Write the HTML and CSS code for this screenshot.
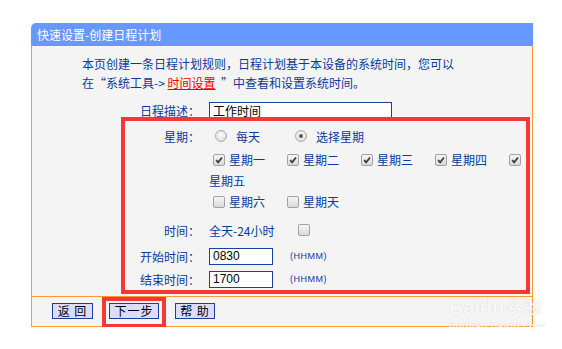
FILE: index.html
```html
<!DOCTYPE html>
<html lang="zh-CN">
<head>
   <meta charset="UTF-8">
   <title>快速设置-创建日程计划</title>
   <link rel="stylesheet" href="styles.css">
</head>
<body>
   <div class="panel">
       <div class="panel-head">快速设置-创建日程计划</div>
       <div class="panel-body">
           <div class="content">
               <p class="intro">
                   本页创建一条日程计划规则，日程计划基于本设备的系统时间，您可以<br>
                   在“系统工具-&gt;&nbsp;<a href="#">时间设置</a>&nbsp; ”中查看和设置系统时间。
               </p>

               <div class="row row-desc">
                   <span class="lbl">日程描述：</span>
                   <input class="text-in desc-in" type="text" value="工作时间">
               </div>

               <div class="row">
                   <span class="lbl">星期：</span>
                   <label class="opt"><span class="radio"></span>每天</label>
                   <label class="opt"><span class="radio on"></span>选择星期</label>
               </div>

               <div class="row row-days">
                   <span class="lbl"></span>
                   <div class="days">
                       <label class="day"><span class="cb on"><svg viewBox="0 0 12 12"><path d="M2.6 6.2 L5 8.8 L9.6 3"/></svg></span><span class="day-name">星期一</span></label>
                       <label class="day"><span class="cb on"><svg viewBox="0 0 12 12"><path d="M2.6 6.2 L5 8.8 L9.6 3"/></svg></span><span class="day-name">星期二</span></label>
                       <label class="day"><span class="cb on"><svg viewBox="0 0 12 12"><path d="M2.6 6.2 L5 8.8 L9.6 3"/></svg></span><span class="day-name">星期三</span></label>
                       <label class="day"><span class="cb on"><svg viewBox="0 0 12 12"><path d="M2.6 6.2 L5 8.8 L9.6 3"/></svg></span><span class="day-name">星期四</span></label>
                       <label class="day"><span class="cb on"><svg viewBox="0 0 12 12"><path d="M2.6 6.2 L5 8.8 L9.6 3"/></svg></span><span class="day-name">星期五</span></label>
                       <i class="brk"></i>
                       <label class="day"><span class="cb"></span><span class="day-name">星期六</span></label>
                       <label class="day"><span class="cb"></span><span class="day-name">星期天</span></label>
                   </div>
               </div>

               <div class="row row-time">
                   <span class="lbl">时间：</span>
                   <span>全天-24小时</span>
                   <span class="cb allday"></span>
               </div>

               <div class="row row-start">
                   <span class="lbl">开始时间：</span>
                   <input class="text-in time-in" type="text" value="0830">
                   <span class="fmt">(HHMM)</span>
               </div>

               <div class="row row-end">
                   <span class="lbl">结束时间：</span>
                   <input class="text-in time-in" type="text" value="1700">
                   <span class="fmt">(HHMM)</span>
               </div>
           </div>

           <div class="footer">
               <button class="btn btn-back">返 回</button>
               <button class="btn btn-next">下一步</button>
               <button class="btn btn-help">帮 助</button>
           </div>
       </div>

       <!-- annotation marks -->
       <div class="mark mark-form"></div>
       <div class="mark mark-next"></div>

       <div class="watermark">
           <div class="wm-logo">Baidu<span>经验</span></div>
           <div class="wm-url">jingyan.baidu.com</div>
       </div>
   </div>
</body>
</html>
```

FILE: styles.css
```css
* {
    margin: 0;
    padding: 0;
    box-sizing: border-box;
}

body {
    font-family: "Noto Sans CJK SC", "Liberation Sans", sans-serif;
    font-size: 12px;
    color: #0a3a9e;
    background: #fff;
}

.panel {
    position: relative;
    width: 502px;
    margin: 23px 0 0 31px;
}

.panel-head {
    height: 23px;
    line-height: 23px;
    padding-left: 6px;
    background: #6699ff;
    color: #fff;
    border-radius: 5px 0 0 0;
}

.panel-body {
    background: #f4f4f4;
    border: 1px solid #ff9933;
    border-top: none;
}

.content {
    padding: 8px 0 7px;
}

.intro {
    padding-left: 50px;
    line-height: 19px;
    margin-bottom: 5px;
}

.intro a {
    color: #ee0000;
    text-decoration: underline;
}

.row {
    display: flex;
    align-items: center;
    height: 26px;
}

.lbl {
    flex: none;
    width: 168px;
    margin-right: 9px;
    text-align: right;
}

.text-in {
    height: 17px;
    border: 1px solid #1c3f9c;
    background: #fff;
    color: #000;
    font-family: "Liberation Sans", "Noto Sans CJK SC", sans-serif;
    font-size: 12px;
    padding: 0 3px;
    outline: none;
}

.desc-in {
    width: 183px;
    margin-top: 1px;
}

.time-in {
    width: 64px;
}

/* radios */
.opt {
    display: flex;
    align-items: center;
}

.radio {
    position: relative;
    width: 12px;
    height: 12px;
    margin: 0 9px 0 6px;
    border: 1px solid #a9a9a9;
    border-radius: 50%;
    background: radial-gradient(circle at 45% 40%, #fbfbfb 0%, #e6e6e6 55%, #cfcfcf 100%);
}

.radio.on::after {
    content: "";
    position: absolute;
    left: 3px;
    top: 3px;
    width: 4px;
    height: 4px;
    border-radius: 50%;
    background: #5c5c5c;
}

.opt + .opt {
    margin-left: 29px;
}

/* checkboxes */
.cb {
    display: inline-block;
    flex: none;
    width: 12px;
    height: 12px;
    border: 1px solid #a2a2a2;
    border-radius: 2px;
    background: linear-gradient(#f6f6f6, #d9d9d9);
}

.cb svg {
    display: block;
    width: 10px;
    height: 10px;
}

.cb svg path {
    fill: none;
    stroke: #3c3c3c;
    stroke-width: 2.2;
}

.row-days {
    height: auto;
    align-items: flex-start;
}

.days {
    display: flex;
    flex-wrap: wrap;
    align-items: center;
    width: 323px;
}

.day {
    display: contents;
}

.days .cb {
    margin: 0 4px;
}

.day-name {
    width: 36px;
    margin-right: 18px;
    line-height: 21px;
    white-space: nowrap;
}

.brk {
    flex-basis: 100%;
    height: 0;
}

.row-time,
.row-start,
.row-end {
    height: 20px;
}

.row-time {
    margin-top: 8px;
}

.allday {
    margin-left: 23px;
}

.row-start {
    margin-top: 6px;
}

.row-end {
    margin-top: 3px;
}

.fmt {
    margin-left: 17px;
    font-family: "Liberation Sans", sans-serif;
    font-size: 9px;
    letter-spacing: 0.5px;
}

/* footer buttons */
.footer {
    display: flex;
    align-items: flex-start;
    gap: 16px;
    height: 30px;
    padding: 6px 0 0 20px;
    border-top: 1px solid #ff9933;
}

.btn {
    height: 16px;
    border: 1px solid #1c3f9c;
    background: #dcdcfd;
    color: #000;
    font-family: "Noto Sans CJK SC", sans-serif;
    font-size: 12px;
    line-height: 14px;
    letter-spacing: 1px;
}

.btn-back { width: 41px; }
.btn-next { width: 50px; }
.btn-help { width: 40px; }

/* red annotation boxes */
.mark {
    position: absolute;
    border: 4px solid #f43838;
}

.mark-form {
    left: 90px;
    top: 94px;
    width: 409px;
    height: 177px;
}

.mark-next {
    left: 71px;
    top: 274px;
    width: 64px;
    height: 31px;
}

.watermark {
    position: absolute;
    left: 418px;
    top: 272px;
    white-space: nowrap;
    color: rgba(255, 255, 255, 0.9);
    text-shadow: 0 0 1px rgba(0, 0, 0, 0.2);
    font-family: "Liberation Sans", sans-serif;
}

.wm-logo {
    font-size: 20px;
    font-weight: bold;
    line-height: 24px;
}

.wm-logo span {
    font-family: "Noto Sans CJK SC", sans-serif;
    font-size: 17px;
    margin-left: 3px;
}

.wm-url {
    font-size: 11px;
    font-weight: bold;
    line-height: 12px;
    margin-top: 1px;
}
```
